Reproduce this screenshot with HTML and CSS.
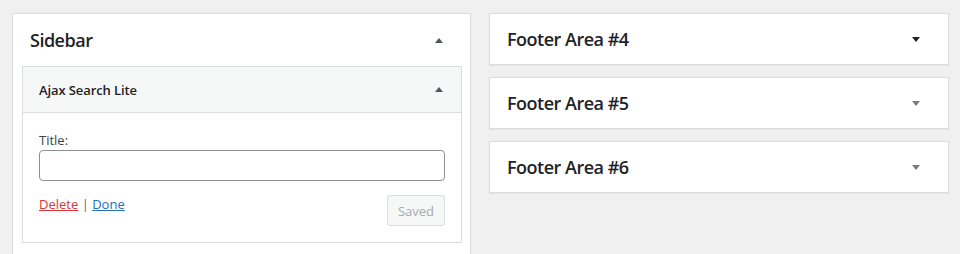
FILE: index.html
```html
<!DOCTYPE html>
<html lang="en">
<head>
    <meta charset="UTF-8">
    <meta name="viewport" content="width=device-width, initial-scale=1.0">
    <title>Widgets</title>
    <link rel="stylesheet" href="styles.css">
</head>
<body>
    <div class="widgets">
        <!-- Sidebar abierta con un widget -->
        <div class="area area-open">
            <div class="area-head">
                <h2>Sidebar</h2>
                <span class="arrow arrow-up"></span>
            </div>

            <div class="widget">
                <div class="widget-top">
                    <h3>Ajax Search Lite</h3>
                    <span class="arrow arrow-up"></span>
                </div>
                <div class="widget-inside">
                    <label for="widgetTitle">Title:</label>
                    <input type="text" id="widgetTitle" class="field">
                    <div class="widget-actions">
                        <div class="links">
                            <a href="#" class="link-delete">Delete</a> | <a href="#" class="link-done">Done</a>
                        </div>
                        <button class="button-saved" disabled>Saved</button>
                    </div>
                </div>
            </div>
        </div>

        <!-- Areas cerradas -->
        <div class="column">
            <div class="area area-closed">
                <div class="area-head">
                    <h2>Footer Area #4</h2>
                    <span class="arrow arrow-down dark"></span>
                </div>
            </div>
            <div class="area area-closed">
                <div class="area-head">
                    <h2>Footer Area #5</h2>
                    <span class="arrow arrow-down"></span>
                </div>
            </div>
            <div class="area area-closed">
                <div class="area-head">
                    <h2>Footer Area #6</h2>
                    <span class="arrow arrow-down"></span>
                </div>
            </div>
        </div>
    </div>
</body>
</html>
```

FILE: styles.css
```css
body {
    margin: 0;
    padding: 13px 11px 0 12px;
    background-color: #f0f0f1;
    font-family: "Open Sans", "Noto Sans", sans-serif;
    color: #1d2327;
    overflow: hidden;
}

.widgets {
    display: grid;
    grid-template-columns: 459px 460px;
    gap: 18px;
    align-items: start;
}

.column {
    display: flex;
    flex-direction: column;
    gap: 12px;
}

.area {
    background-color: #ffffff;
    border: 1px solid #dcdcde;
    box-shadow: 0 1px 1px rgba(0, 0, 0, 0.04);
}

.area-open {
    min-height: 280px;
}

.area-head {
    display: flex;
    align-items: center;
    justify-content: space-between;
    height: 52px;
    padding: 0 27px 0 17px;
}

.area-closed .area-head {
    height: 50px;
    padding-right: 28px;
}

.area-head h2 {
    margin: 0;
    font-size: 18px;
    font-weight: 600;
    letter-spacing: -0.5px;
    line-height: 24px;
}

.arrow {
    width: 0;
    height: 0;
    border-left: 4px solid transparent;
    border-right: 4px solid transparent;
}

.arrow-up {
    border-bottom: 5px solid #50575e;
}

.arrow-down {
    border-top: 5px solid #787c82;
}

.arrow-down.dark {
    border-top-color: #1d2327;
}

.widget {
    margin: 0 8px 0 9px;
    border: 1px solid #dcdcde;
}

.widget-top {
    display: flex;
    align-items: center;
    justify-content: space-between;
    height: 45px;
    padding: 0 18px 0 16px;
    background-color: #f6f7f7;
    border-bottom: 1px solid #dcdcde;
}

.widget-top h3 {
    margin: 0;
    font-size: 13px;
    font-weight: 600;
    letter-spacing: -0.1px;
}

.widget-inside {
    padding: 18px 16px 16px;
    font-size: 13px;
}

.widget-inside label {
    display: block;
    line-height: 18px;
    margin-bottom: 1px;
    color: #3c434a;
}

.field {
    display: block;
    box-sizing: border-box;
    width: 100%;
    height: 31px;
    margin: 0;
    border: 1px solid #8c8f94;
    border-radius: 4px;
    background-color: #ffffff;
}

.widget-actions {
    display: flex;
    justify-content: space-between;
    align-items: flex-start;
    margin-top: 14px;
}

.links {
    line-height: 18px;
    color: #646970;
}

.link-delete {
    color: #d63638;
}

.link-done {
    color: #2271b1;
}

.button-saved {
    width: 58px;
    height: 31px;
    font-family: inherit;
    font-size: 13px;
    color: #a7aaad;
    background-color: #f6f7f7;
    border: 1px solid #dcdcde;
    border-radius: 3px;
    padding: 0;
}
```
